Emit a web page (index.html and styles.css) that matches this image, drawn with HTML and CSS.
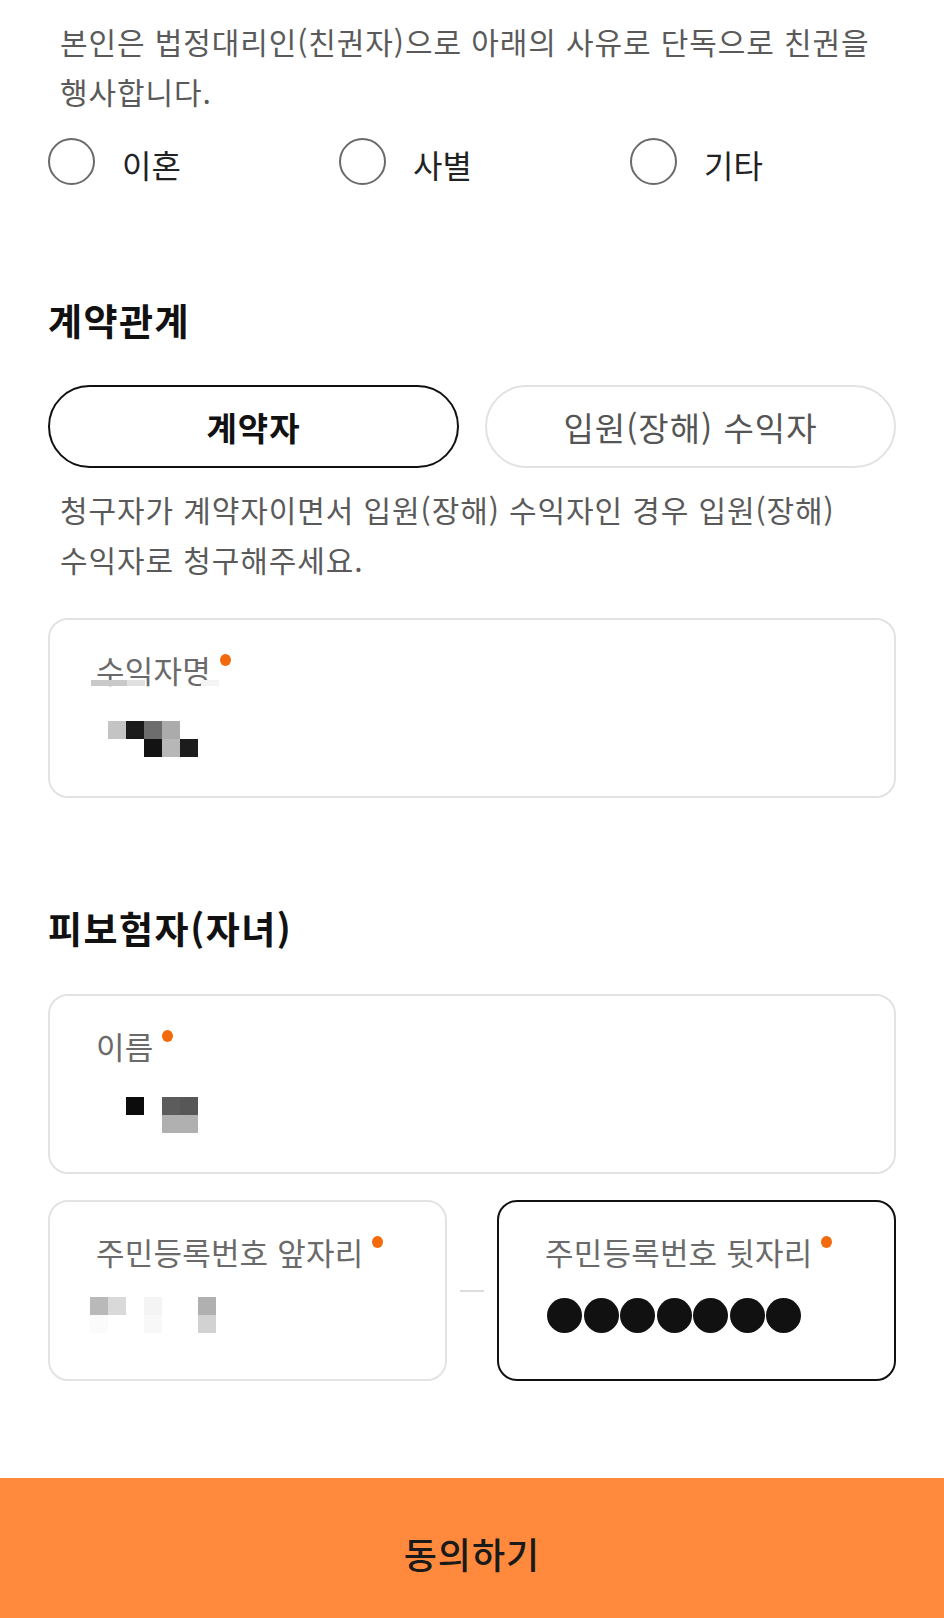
FILE: index.html
```html
<!DOCTYPE html>
<html lang="ko">
<head>
<meta charset="utf-8">
<title>친권 행사 동의</title>
<link rel="stylesheet" href="styles.css">
</head>
<body>
<main class="page">
  <div class="content">
    <p class="desc">본인은 법정대리인(친권자)으로 아래의 사유로 단독으로 친권을 행사합니다.</p>
    <div class="radio-group">
      <label class="radio"><span class="radio-circle"></span><span class="radio-text">이혼</span></label>
      <label class="radio"><span class="radio-circle"></span><span class="radio-text">사별</span></label>
      <label class="radio"><span class="radio-circle"></span><span class="radio-text">기타</span></label>
    </div>

    <h2 class="section-title">계약관계</h2>
    <div class="toggle-group">
      <button class="toggle is-selected" type="button">계약자</button>
      <button class="toggle" type="button">입원(장해) 수익자</button>
    </div>
    <p class="desc helper">청구자가 계약자이면서 입원(장해) 수익자인 경우 입원(장해) 수익자로 청구해주세요.</p>

    <div class="field field-first">
      <div class="field-label">수익자명<span class="req"></span></div>
      <div class="label-blur">
        <span class="lb lb-a"></span><span class="lb lb-b"></span><span class="lb lb-gap"></span><span class="lb lb-c"></span>
      </div>
      <div class="value">
        <div class="mosaic mosaic-1">
          <span class="px s-c4"></span><span class="px s-1b"></span><span class="px s-6d"></span><span class="px s-ab"></span><span class="px"></span>
          <span class="px"></span><span class="px"></span><span class="px s-13"></span><span class="px s-b7"></span><span class="px s-1c"></span>
        </div>
      </div>
    </div>

    <h2 class="section-title section-title-2">피보험자(자녀)</h2>

    <div class="field field-name">
      <div class="field-label">이름<span class="req"></span></div>
      <div class="value">
        <div class="mosaic mosaic-2">
          <span class="px s-0c"></span><span class="px"></span><span class="px s-5c"></span><span class="px s-57"></span>
          <span class="px"></span><span class="px"></span><span class="px s-b0"></span><span class="px s-b0"></span>
        </div>
      </div>
    </div>

    <div class="id-row">
      <div class="field field-compact">
        <div class="field-label">주민등록번호 앞자리<span class="req"></span></div>
        <div class="value">
          <div class="mosaic mosaic-3">
            <span class="px s-b9"></span><span class="px s-d9"></span><span class="px"></span><span class="px s-f4"></span><span class="px"></span><span class="px"></span><span class="px s-b0"></span>
            <span class="px s-fb"></span><span class="px"></span><span class="px"></span><span class="px s-f8"></span><span class="px"></span><span class="px"></span><span class="px s-d2"></span>
          </div>
        </div>
      </div>
      <span class="dash"></span>
      <div class="field field-compact is-focused">
        <div class="field-label">주민등록번호 뒷자리<span class="req"></span></div>
        <div class="value">
          <div class="pin-dots" aria-label="입력됨">
            <span class="pin-dot"></span><span class="pin-dot"></span><span class="pin-dot"></span><span class="pin-dot"></span><span class="pin-dot"></span><span class="pin-dot"></span><span class="pin-dot"></span>
          </div>
        </div>
      </div>
    </div>
  </div>

  <div class="cta">동의하기</div>
</main>
</body>
</html>
```

FILE: styles.css
```css
html, body {
  margin: 0;
  padding: 0;
  background: #ffffff;
}

body {
  font-family: "Noto Sans CJK KR", "Noto Sans", "DejaVu Sans", sans-serif;
  color: #222222;
}

.page {
  width: 944px;
}

.content {
  padding: 16px 48px 0;
}

.desc {
  margin: 0;
  padding: 0 12px;
  font-size: 30px;
  letter-spacing: 0.9px;
  line-height: 50px;
  color: #5a5a5a;
  word-break: keep-all;
}

/* radios */
.radio-group {
  display: flex;
  margin-top: 22px;
}

.radio {
  flex: none;
  width: 291px;
  display: flex;
  align-items: center;
  gap: 27px;
}

.radio-circle {
  width: 47px;
  height: 47px;
  box-sizing: border-box;
  border: 2.5px solid #6a6a6a;
  border-radius: 50%;
  flex: none;
}

.radio-text {
  font-size: 32px;
  line-height: 41px;
  padding-top: 6px;
  color: #222222;
}

/* section titles */
.section-title {
  margin: 111px 0 0;
  font-size: 37px;
  letter-spacing: 1.5px;
  font-weight: 700;
  line-height: 48px;
  color: #111111;
}

.section-title-2 {
  margin-top: 106px;
}

/* toggle */
.toggle-group {
  display: flex;
  gap: 26px;
  margin-top: 41px;
}

.toggle {
  flex: 1;
  height: 83px;
  box-sizing: border-box;
  border: 2px solid #e2e2e2;
  border-radius: 42px;
  background: #ffffff;
  font-family: inherit;
  font-size: 33px;
  letter-spacing: 1px;
  color: #555555;
  padding: 0;
}

.toggle.is-selected {
  border-color: #111111;
  color: #111111;
  font-weight: 700;
}

.helper {
  margin-top: 16px;
}

/* fields */
.field {
  position: relative;
  border: 2px solid #e3e3e3;
  border-radius: 20px;
  padding: 24px 46px 39px;
  margin-top: 34px;
  background: #ffffff;
}

.field-name {
  margin-top: 42px;
}

.field-label {
  font-size: 31px;
  letter-spacing: 0.2px;
  line-height: 52px;
  color: #6a6a6a;
  white-space: nowrap;
}

.req {
  display: inline-block;
  width: 11px;
  height: 12px;
  border-radius: 50%;
  background: #f26a0c;
  vertical-align: top;
  margin: 10px 0 0 9px;
}

.value {
  margin-top: 25px;
  height: 36px;
}

.field-compact {
  padding-bottom: 46px;
}

.field-compact .value {
  margin-top: 19px;
}

.field.is-focused {
  border-color: #111111;
}

/* mosaic (privacy blur) */
.mosaic {
  display: grid;
  grid-auto-rows: 18px;
}

.mosaic-1 {
  grid-template-columns: repeat(5, 18px);
  margin-left: 12px;
}

.mosaic-2 {
  grid-template-columns: repeat(4, 18px);
  margin-left: 30px;
}

.mosaic-3 {
  grid-template-columns: repeat(7, 18px);
  margin-left: -6px;
}

.px { display: block; }
.s-c4 { background: #c4c4c4; }
.s-1b { background: #1b1b1b; }
.s-6d { background: #6d6d6d; }
.s-ab { background: #ababab; }
.s-13 { background: #131313; }
.s-b7 { background: #b7b7b7; }
.s-1c { background: #1c1c1c; }
.s-0c { background: #0c0c0c; }
.s-5c { background: #5c5c5c; }
.s-57 { background: #575757; }
.s-b0 { background: #b0b0b0; }
.s-b9 { background: #b9b9b9; }
.s-d9 { background: #d9d9d9; }
.s-f4 { background: #f4f4f4; }
.s-fb { background: #fbfbfb; }
.s-f8 { background: #f8f8f8; }
.s-d2 { background: #d2d2d2; }

/* blur strip overlapping the first label */
.label-blur {
  position: absolute;
  left: 41px;
  top: 60px;
  display: flex;
  height: 6px;
}

.lb { display: block; width: 18px; height: 6px; }
.lb-a { background: #c9c9c9; width: 36px; }
.lb-b { background: #e0e0e0; }
.lb-gap { width: 56px; }
.lb-c { background: #f4f4f4; }

/* id row */
.id-row {
  display: flex;
  align-items: center;
  gap: 13px;
  margin-top: 26px;
}

.id-row .field {
  flex: 1;
  margin-top: 0;
}

.dash {
  flex: none;
  width: 24px;
  height: 2px;
  background: #dddddd;
}

.pin-dots {
  display: flex;
  gap: 1.5px;
  margin-left: 2px;
  padding-top: 1px;
}

.pin-dot {
  width: 35px;
  height: 35px;
  border-radius: 50%;
  background: #111111;
}

/* bottom CTA */
.cta {
  margin-top: 97px;
  height: 140px;
  box-sizing: border-box;
  padding-top: 10px;
  background: #ff8a3d;
  display: flex;
  align-items: center;
  justify-content: center;
  font-size: 36px;
  letter-spacing: 1px;
  font-weight: 500;
  color: #1a1a1a;
}
```
